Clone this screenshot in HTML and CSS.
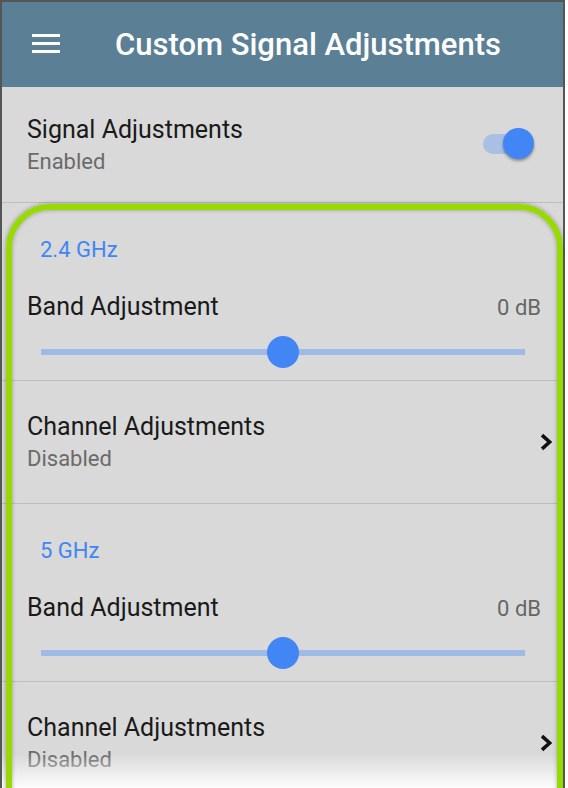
FILE: index.html
```html
<!DOCTYPE html>
<html lang="en">
<head>
<meta charset="utf-8">
<title>Custom Signal Adjustments</title>
<link rel="stylesheet" href="styles.css">
</head>
<body>
<div class="device">
  <header class="appbar">
    <div class="menu"><span></span><span></span><span></span></div>
    <h1 class="title">Custom Signal Adjustments</h1>
  </header>

  <div class="row toggle-row">
    <div class="texts">
      <div class="primary">Signal Adjustments</div>
      <div class="secondary">Enabled</div>
    </div>
    <div class="switch"><span class="track"></span><span class="knob"></span></div>
  </div>

  <section class="band">
    <div class="band-label">2.4 GHz</div>
    <div class="band-row">
      <span class="primary">Band Adjustment</span>
      <span class="value">0 dB</span>
    </div>
    <div class="slider"><span class="rail"></span><span class="thumb" style="left: 50%"></span></div>
  </section>
  <div class="row link-row">
    <div class="texts">
      <div class="primary">Channel Adjustments</div>
      <div class="secondary">Disabled</div>
    </div>
    <svg class="chevron" width="12" height="18" viewBox="0 0 12 18"><polyline points="2,2.2 9.6,9 2,15.8" fill="none" stroke="#111" stroke-width="3.6"/></svg>
  </div>

  <section class="band">
    <div class="band-label">5 GHz</div>
    <div class="band-row">
      <span class="primary">Band Adjustment</span>
      <span class="value">0 dB</span>
    </div>
    <div class="slider"><span class="rail"></span><span class="thumb" style="left: 50%"></span></div>
  </section>
  <div class="row link-row">
    <div class="texts">
      <div class="primary">Channel Adjustments</div>
      <div class="secondary">Disabled</div>
    </div>
    <svg class="chevron" width="12" height="18" viewBox="0 0 12 18"><polyline points="2,2.2 9.6,9 2,15.8" fill="none" stroke="#111" stroke-width="3.6"/></svg>
  </div>

  <div class="fade"></div>
  <div class="highlight"></div>
</div>
</body>
</html>
```

FILE: styles.css
```css
html, body {
  margin: 0;
  padding: 0;
  background: #ffffff;
}
body {
  font-family: Roboto, "Liberation Sans", sans-serif;
}
.device {
  position: relative;
  width: 561px;
  height: 786px;
  border: 2px solid #555555;
  border-bottom: none;
  background: #d9d9d9;
  overflow: hidden;
}
.appbar {
  height: 85px;
  background: #5b7f95;
  display: flex;
  align-items: center;
  padding-left: 30px;
}
.menu {
  width: 28px;
  display: flex;
  flex-direction: column;
  gap: 5px;
  margin-top: -2px;
}
.menu span {
  display: block;
  height: 3px;
  background: #ffffff;
}
.title {
  margin: 0 0 0 55px;
  font-size: 31px;
  line-height: 31px;
  font-weight: 500;
  color: #ffffff;
}
.row {
  display: flex;
  align-items: center;
  border-bottom: 1px solid #bdbdbd;
}
.toggle-row {
  padding: 29px 29px 27px 25px;
}
.link-row {
  padding: 32px 11px 31px 25px;
}
.texts {
  flex: 1;
}
.primary {
  font-size: 25px;
  line-height: 28px;
  color: #1a1a1a;
}
.secondary {
  margin-top: 5px;
  font-size: 22px;
  line-height: 26px;
  color: #6b6b6b;
}
.switch {
  position: relative;
  width: 51px;
  height: 31px;
  margin-bottom: 5px;
}
.track {
  position: absolute;
  left: 0;
  top: 6px;
  width: 44px;
  height: 20px;
  border-radius: 10px;
  background: #a9bfe3;
}
.knob {
  position: absolute;
  right: 0;
  top: 0;
  width: 31px;
  height: 31px;
  border-radius: 50%;
  background: #4285f4;
  box-shadow: 0 2px 3px rgba(0, 0, 0, 0.35);
}
.band {
  padding: 34px 22px 12px 0;
  border-bottom: 1px solid #bdbdbd;
}
.band-label {
  padding-left: 38px;
  font-size: 22px;
  line-height: 26px;
  color: #4285f4;
}
.band-row {
  margin-top: 30px;
  padding-left: 25px;
  display: flex;
  justify-content: space-between;
  align-items: baseline;
}
.value {
  font-size: 22px;
  line-height: 28px;
  color: #666666;
}
.slider {
  position: relative;
  margin: 14px 16px 0 39px;
  height: 32px;
}
.rail {
  position: absolute;
  left: 0;
  right: 0;
  top: 13px;
  height: 6px;
  background: #9fbae4;
}
.thumb {
  position: absolute;
  top: 0;
  width: 32px;
  height: 32px;
  margin-left: -16px;
  border-radius: 50%;
  background: #4285f4;
}
.chevron {
  display: block;
  margin-bottom: 2px;
}
.fade {
  position: absolute;
  left: 0;
  right: 0;
  bottom: 0;
  height: 34px;
  background: linear-gradient(to bottom, rgba(255, 255, 255, 0), rgba(255, 255, 255, 0.95));
}
.highlight {
  position: absolute;
  left: 4px;
  right: 0;
  top: 202px;
  height: 700px;
  border: 6px solid #97d900;
  border-radius: 44px;
  box-shadow: 0 0 4px rgba(0, 0, 0, 0.35), inset 0 0 4px rgba(0, 0, 0, 0.3);
}
```
